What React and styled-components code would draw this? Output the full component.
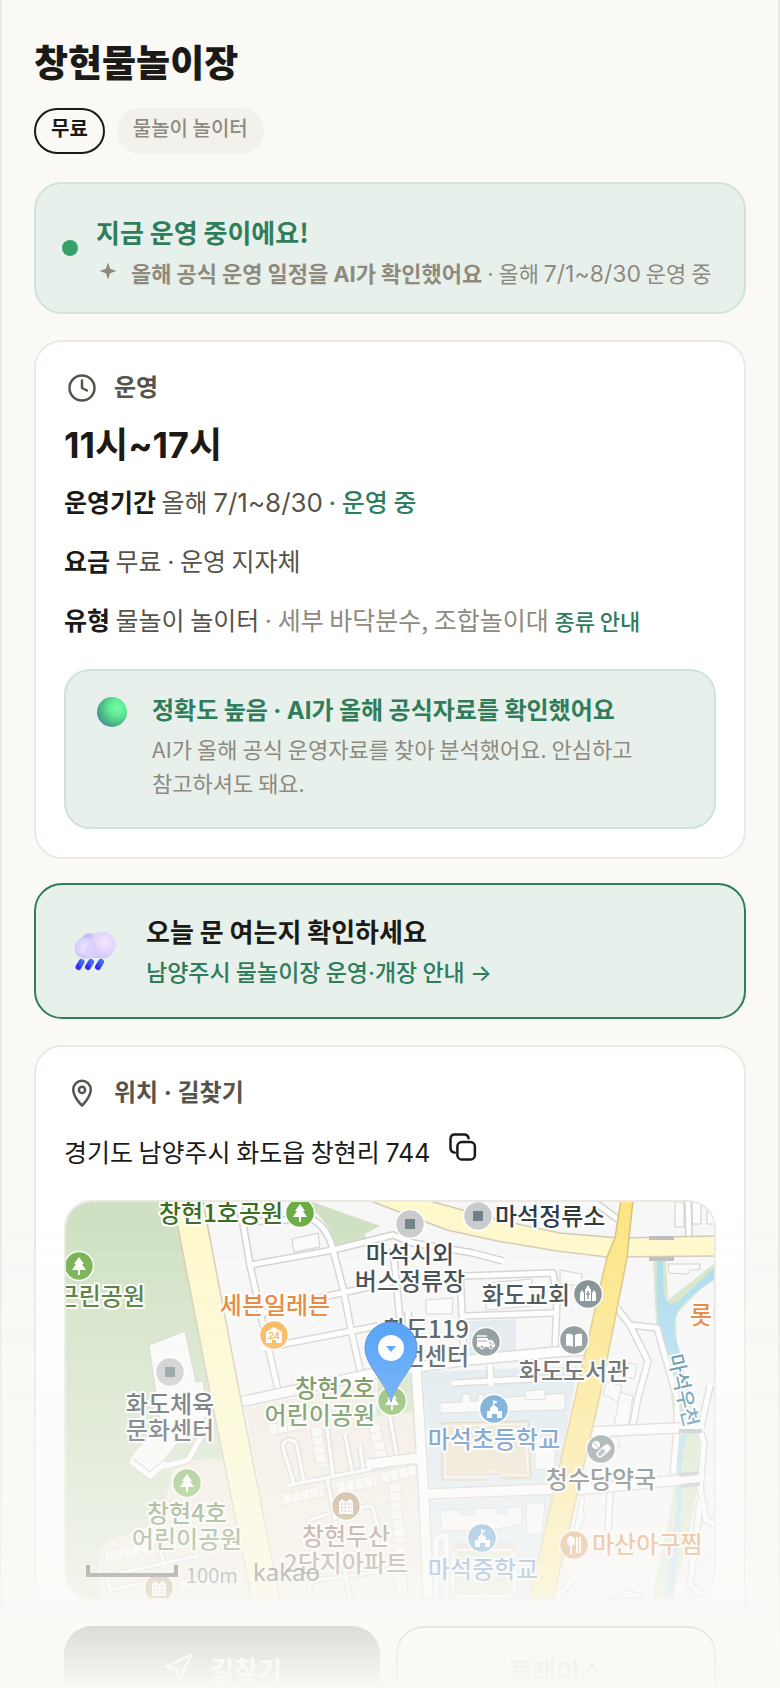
import React from 'react'
import styled, { createGlobalStyle } from 'styled-components'
import { Clock, Navigation } from 'lucide-react'

const Colors = {
  page: '#faf9f6',
  line: '#ebe9e2',
  ink: '#1c1a17',
  body: '#57534a',
  muted: '#8f8a7e',
  green: '#2f7d5b',
  mint: '#e8f0eb',
  mintLine: '#cfe4d8',
}

const Fonts = {
  text: "'Noto Sans CJK KR', sans-serif",
  display: "Inter, 'Noto Sans CJK KR', sans-serif",
}

const GlobalStyle = createGlobalStyle`
  * {
    box-sizing: border-box;
  }

  body {
    margin: 0;
    background: ${Colors.page};
    color: ${Colors.ink};
    font-family: ${Fonts.text};
    font-size: 25px;
    line-height: 36px;
    word-break: keep-all;
  }

  h1, h2, p {
    margin: 0;
  }
`

const Page = styled.main`
  position: relative;
  height: 100vh;
  overflow: hidden;
  padding: 38px 32px 0;
  border: solid ${Colors.line};
  border-width: 0 2px;
`

// Latin letters, digits and signs inside Korean text
const Num = styled.span`
  font-family: ${Fonts.display};
  font-size: ${(p) => (p.$size ? `${p.$size}px` : 'inherit')};
  line-height: 1;
`

const Title = styled.h1`
  font-size: 37px;
  line-height: 46px;
  font-weight: 800;
`

const Chips = styled.div`
  display: flex;
  gap: 12px;
  margin: 24px 0 28px;
`

const Chip = styled.span`
  padding: 3px ${(p) => (p.$strong ? 15 : 14)}px 9px;
  border: 2px solid ${(p) => (p.$strong ? Colors.ink : '#f3f1ec')};
  border-radius: 23px;
  background: ${(p) => (p.$strong ? Colors.page : '#f3f1ec')};
  color: ${(p) => (p.$strong ? Colors.ink : Colors.muted)};
  font-size: 20px;
  line-height: 30px;
  font-weight: ${(p) => (p.$strong ? 700 : 500)};
`

const Status = styled.section`
  display: flex;
  align-items: center;
  gap: 18px;
  margin-bottom: 26px;
  padding: 22px 22px 22px 26px;
  border: 2px solid ${Colors.mintLine};
  border-radius: 28px;
  background: ${Colors.mint};
`

const StatusBody = styled.div`
  padding-top: 6px;
`

const Dot = styled.span`
  flex: none;
  width: 16px;
  height: 16px;
  border-radius: 50%;
  background: #36a26b;
`

const StatusTitle = styled.h2`
  margin-bottom: 2px;
  color: ${Colors.green};
  font-size: 26px;
  line-height: 40px;
  font-weight: 700;
`

const StatusNote = styled.p`
  display: flex;
  gap: 13px;
  color: ${Colors.muted};
  font-size: 22px;
  line-height: 36px;

  svg {
    flex: none;
    margin: 7px 0 0 2px;
  }
`

const Card = styled.section`
  margin-bottom: 24px;
  padding: 28px;
  border: 2px solid ${Colors.line};
  border-radius: 28px;
  background: #fff;
`

const CardHead = styled.h2`
  display: flex;
  align-items: center;
  gap: 14px;
  color: ${Colors.body};
  font-family: ${Fonts.display};
  font-size: 24px;
  line-height: 36px;
  font-weight: 700;

  svg {
    margin: 0 3px;
  }
`

const Hours = styled.p`
  margin: 15px 0 12px;
  font-family: ${Fonts.display};
  font-size: 36px;
  line-height: 48px;
  font-weight: 700;
`

const Info = styled.p`
  margin-bottom: 19px;
  color: ${Colors.body};
  line-height: 40px;

  b {
    color: ${Colors.ink};
  }
`

const Accent = styled.span`
  color: ${Colors.green};
  font-weight: 500;
`

const Muted = styled.span`
  color: ${Colors.muted};
`

const GuideLink = styled.a`
  color: ${Colors.green};
  font-size: 22px;
  font-weight: 500;
  line-height: 1;
  text-decoration: none;
`

const Accuracy = styled.div`
  display: flex;
  gap: 24px;
  margin-top: 30px;
  padding: 20px 30px 28px;
  border: 2px solid ${Colors.mintLine};
  border-radius: 26px;
  background: ${Colors.mint};

  svg {
    flex: none;
    margin-top: 5px;
  }
`

const AccuracyTitle = styled.p`
  margin-bottom: 4px;
  color: ${Colors.green};
  font-size: 24px;
  line-height: 36px;
  font-weight: 700;
`

const AccuracyText = styled.p`
  max-width: 520px;
  color: ${Colors.muted};
  font-size: 22px;
  line-height: 34px;
`

const Notice = styled.a`
  display: flex;
  align-items: center;
  gap: 24px;
  margin-bottom: 26px;
  padding: 26px 32px;
  border: 2px solid ${Colors.green};
  border-radius: 28px;
  background: ${Colors.mint};
  color: ${Colors.green};
  text-decoration: none;

  svg {
    flex: none;
  }
`

const NoticeTitle = styled.span`
  display: block;
  color: ${Colors.ink};
  font-size: 26px;
  line-height: 40px;
  font-weight: 700;
`

const NoticeText = styled.span`
  display: block;
  font-size: 23px;
  line-height: 40px;
  font-weight: 500;
`

const Address = styled.div`
  display: flex;
  align-items: center;
  gap: 18px;
  margin: 20px 0 29px;
`

const CopyButton = styled.button`
  display: flex;
  padding: 1px 0 9px;
  border: 0;
  background: none;
  color: ${Colors.ink};
  cursor: pointer;
`

const MapFrame = styled.div`
  overflow: hidden;
  height: 400px;
  border: 2px solid ${Colors.line};
  border-radius: 28px;
  background: #f7f7f7;

  svg {
    display: block;
    width: 100%;
    height: 100%;
  }
`

const Label = styled.text`
  fill: ${(p) => p.$color};
  stroke: #fff;
  stroke-width: 4px;
  stroke-linejoin: round;
  paint-order: stroke;
  font-family: ${Fonts.text};
  font-size: ${(p) => p.$size || 24}px;
  font-weight: 500;
  text-anchor: ${(p) => p.$anchor || 'middle'};
`

const Actions = styled.div`
  display: flex;
  gap: 16px;
  margin-top: 26px;
`

const Action = styled.button`
  box-sizing: content-box;
  display: flex;
  flex: 1 1 0;
  align-items: center;
  justify-content: center;
  gap: 16px;
  padding: 0;
  height: 84px;
  border: ${(p) => (p.$primary ? '0' : `2px solid ${Colors.green}`)};
  border-radius: 28px;
  background: ${(p) => (p.$primary ? Colors.ink : '#fff')};
  color: ${(p) => (p.$primary ? '#fff' : Colors.green)};
  font-family: ${Fonts.display};
  font-size: 26px;
  font-weight: 700;
  cursor: pointer;
`

const Fade = styled.div`
  position: fixed;
  left: 0;
  right: 0;
  bottom: 0;
  height: 480px;
  background: linear-gradient(to top, rgba(250, 249, 246, 1), rgba(250, 249, 246, 0));
  pointer-events: none;
`

function Sparkle() {
  return (
    <svg width="20" height="20" viewBox="0 0 20 20" aria-hidden="true">
      <path d="M10 1.500 L12.200 7.800 L18.500 10 L12.200 12.200 L10 18.500 L7.800 12.200 L1.500 10 L7.800 7.800 Z" fill={Colors.muted} />
    </svg>
  )
}

function Pin() {
  return (
    <svg width="30" height="30" viewBox="0 0 24 24" fill="none" stroke="currentColor" strokeWidth="2" strokeLinejoin="round" aria-hidden="true">
      <path d="M12 22 C12 22 19 15.500 19 9.200 A7 7 0 0 0 5 9.200 C5 15.500 12 22 12 22 Z" />
      <circle cx="12" cy="9.500" r="2.500" />
    </svg>
  )
}

function CopyIcon() {
  return (
    <svg width="30" height="30" viewBox="0 0 24 24" fill="none" stroke="currentColor" strokeWidth="2" strokeLinecap="round" aria-hidden="true">
      <rect x="7.500" y="8" width="14" height="14" rx="3.500" />
      <path d="M5.500 16.500 Q2 16 2 13 V5.500 Q2 2 5.500 2 H13 Q16 2 16.500 5" />
    </svg>
  )
}

function Ball() {
  return (
    <svg width="32" height="32" viewBox="0 0 32 32" aria-hidden="true">
      <defs>
        <radialGradient id="ball" cx="0.68" cy="0.36" r="0.72">
          <stop offset="0" stopColor="#72fba6" />
          <stop offset="0.4" stopColor="#62e895" />
          <stop offset="0.75" stopColor="#4cb985" />
          <stop offset="1" stopColor="#4b8fa0" />
        </radialGradient>
      </defs>
      <circle cx="16" cy="16" r="15" fill="url(#ball)" />
    </svg>
  )
}

function RainCloud() {
  return (
    <svg width="54" height="54" viewBox="0 0 54 54" aria-hidden="true">
      <defs>
        <radialGradient id="puffA" cx="0.5" cy="0.45" r="0.6">
          <stop offset="0" stopColor="#efe4fb" />
          <stop offset="0.6" stopColor="#dcd2fd" />
          <stop offset="1" stopColor="#c6bdf9" />
        </radialGradient>
        <radialGradient id="puffB" cx="0.6" cy="0.4" r="0.65">
          <stop offset="0" stopColor="#f1e7fb" />
          <stop offset="0.65" stopColor="#dfd3fd" />
          <stop offset="1" stopColor="#c6bbfa" />
        </radialGradient>
        <linearGradient id="drop" x1="0" y1="1" x2="1" y2="0">
          <stop offset="0" stopColor="#3a2cf2" />
          <stop offset="1" stopColor="#3f6cf5" />
        </linearGradient>
      </defs>
      <circle cx="21" cy="16" r="7" fill="#c3bdf9" />
      <path d="M15 18 H37 V34 H17 Z" fill="#d6ccfd" />
      <circle cx="34" cy="21" r="13.500" fill="url(#puffB)" />
      <circle cx="17" cy="24" r="10.500" fill="url(#puffA)" />
      <path d="M17 24 Q24 16 33 26 Q31 34 23 34.500 H18 Z" fill="#dad0fd" opacity="0.8" />
      <g stroke="url(#drop)" strokeWidth="6" strokeLinecap="round">
        <path d="M13.500 38 L10.500 43" />
        <path d="M23 38 L20 43" />
        <path d="M33 38 L30 43" />
      </g>
    </svg>
  )
}

// centre lines of the small streets, drawn as grey casing + white fill
const STREETS = [
  'M171 0 L176 16 L184 63 L196 118 L212 188',
  'M184 63 L267 48 L327 33 L347 41 L407 51 L437 59',
  'M178 20 L246 17 Q262 26 267 48 L277 86 L286 133 L295 172',
  'M194 112 L257 95 L331 79',
  'M198 146 L286 129 L312 124',
  'M398 74 L487 71 L491 96 L489 149',
  'M394 70 L398 154',
  'M399 114 L487 111',
  'M327 46 L334 118',
  'M342 110 L344 160',
  'M388 181 L482 176',
  'M424 164 L425 182',
  'M551 106 L564 123 L591 126 L611 196 L611 226 L607 275',
  'M564 123 L582 159 L572 196 L566 228',
  'M644 184 L634 229 L638 240 L634 286 L640 318 L648 322',
  'M634 300 L624 383 L640 396',
  'M544 289 L542 331',
  'M496 390 L508 376',
  'M622 0 L623 36',
  'M528 0 L556 20',
  'M100 264 L122 258 L142 222',
  'M66 260 L84 274 L98 262',
]

const WIDE_STREETS = [
  'M174 200 L300 173 L350 165 L404 158 L489 150 L520 148',
  'M350 163 L358 296 L362 396',
  'M362 292 L490 287',
  'M510 288 L604 279 L634 276',
  'M522 230 L611 226 L634 226',
  'M304 262 L352 256',
]

const LANES = [
  'M228 282 L217 246 Q216 238 224 238 Q230 238 231 244 L238 280',
  'M224 283 L350 258',
  'M261 226 L267 273',
  'M261 276 L284 396',
  'M279 233 L286 268',
  'M294 244 L297 266',
  'M324 216 L332 260',
  'M262 312 L244 318 Q240 330 250 328',
  'M296 306 Q306 300 308 310 L314 336',
  'M244 390 Q240 380 252 378 L340 366',
  'M92 340 L98 362 M44 390 Q38 372 50 372 L130 354',
  'M44 388 L74 382',
]

// blocks of row houses: thick strokes cut into units by a dash
const ROWS = [
  'M250 226 L256 264',
  'M308 222 L316 258',
  'M218 297 L257 289',
  'M272 286 L310 278',
  'M316 276 L350 268',
  'M204 228 L236 222',
  'M40 355 L80 346',
  'M114 384 L158 374',
  'M328 282 L334 340',
  'M334 346 L336 392',
]

function Tree() {
  return (
    <path
      d="M0 -9 L5 -2 H3 L7 4 H1 V9 H-1 V4 H-7 L-3 -2 H-5 Z"
      fill="#fff"
    />
  )
}

function School() {
  return (
    <path d="M-1 -9 L4 -7 L0 -5 V-4 L4 -1 V2 H8 V9 H3 V5 H-2 V9 H-7 V2 H-4 V-1 L-1 -4 Z" fill="#fff" />
  )
}

function Apartment({ color }) {
  return (
    <g>
      <path d="M-7 8 V-4 L-4 -7 L0 -4 L4 -7 L7 -4 V8 Z" fill="#fff" />
      <g stroke={color} strokeWidth="1.500" strokeDasharray="1.500 2">
        <path d="M-5 -2 H6 M-5 1.500 H6 M-5 5 H6" />
      </g>
    </g>
  )
}

function Square() {
  return <rect x="-5" y="-5" width="10" height="10" fill="#6e8087" />
}

function Church() {
  return (
    <g fill="#fff">
      <path d="M-8 7 V-1 L-6 -4 L-4 -1 V7 Z M8 7 V-1 L6 -4 L4 -1 V7 Z M-3 7 V-4 L0 -9 L3 -4 V7 Z" />
      <path d="M0 -3 V5 M-2 0 H2" stroke="#7d898d" strokeWidth="1.500" />
    </g>
  )
}

function FireTruck() {
  return (
    <g>
      <path d="M-9 -4 H2 V-2 H6 L9 2 V5 H-9 Z" fill="#fff" />
      <path d="M-9 -6 H1" stroke="#fff" strokeWidth="1.500" />
      <path d="M-8 -1 H1 M4 -1 V2 H8" stroke="#87939a" fill="none" />
      <circle cx="-4" cy="5" r="2" fill="#87939a" stroke="#fff" />
      <circle cx="5" cy="5" r="2" fill="#87939a" stroke="#fff" />
    </g>
  )
}

function Book() {
  return (
    <g fill="#fff">
      <path d="M-1 -5 Q-4 -7 -8 -6 V6 Q-4 5 -1 7 Z" />
      <path d="M1 -5 Q4 -7 8 -6 V6 Q4 5 1 7 Z" />
    </g>
  )
}

function Pill() {
  return (
    <g strokeLinecap="round">
      <path d="M-1 5 L6 -1" stroke="#fff" strokeWidth="7" />
      <path d="M-1 5 L2 2" stroke="#8b9598" strokeWidth="4" />
      <circle cx="-5" cy="-4" r="4" fill="#fff" />
      <path d="M-8 -7 L-2 -1" stroke="#8b9598" />
    </g>
  )
}

function Cutlery() {
  return (
    <g fill="#fff">
      <ellipse cx="-3" cy="-4" rx="4" ry="5" />
      <rect x="-4" y="0" width="2" height="9" />
      <rect x="2" y="-8" width="2" height="16" />
      <rect x="5" y="-8" width="2" height="16" />
    </g>
  )
}

function Store() {
  return (
    <g>
      <path d="M-8 8 V-3 L0 -8 L8 -3 V8 H2 V5 H-2 V8 Z" fill="#fff" />
      <text x="0" y="4" textAnchor="middle" fontFamily="Inter, sans-serif" fontSize="9" fontWeight="700" fill="#f5a33a">24</text>
    </g>
  )
}

const PLACES = [
  { x: 234, y: 11, color: '#6cac45', Glyph: Tree },
  { x: 13, y: 64, color: '#6cac45', Glyph: Tree },
  { x: 121, y: 281, color: '#6cac45', Glyph: Tree },
  { x: 326, y: 199, color: '#6cac45', Glyph: Tree },
  { x: 208, y: 133, color: '#fdaa3c', Glyph: Store },
  { x: 104, y: 170, color: '#c4c5ca', Glyph: Square },
  { x: 412, y: 14, color: '#c9cacd', Glyph: Square },
  { x: 344, y: 22, color: '#c9cacd', Glyph: Square },
  { x: 522, y: 92, color: '#728085', Glyph: Church },
  { x: 420, y: 140, color: '#728085', Glyph: FireTruck },
  { x: 508, y: 138, color: '#728085', Glyph: Book },
  { x: 535, y: 247, color: '#728085', Glyph: Pill },
  { x: 428, y: 207, color: '#3584c9', Glyph: School },
  { x: 416, y: 336, color: '#3584c9', Glyph: School },
  { x: 508, y: 343, color: '#d38336', Glyph: Cutlery },
  { x: 280, y: 304, color: '#a87c50', Glyph: Apartment },
  { x: 93, y: 386, color: '#a87c50', Glyph: Apartment },
]

const DARK = '#2c393f'
const PARK = '#3b6b20'
const ORANGE = '#e5701a'

const LABELS = [
  { x: 93, y: 20, text: '창현1호공원', color: PARK, anchor: 'start' },
  { x: 79, y: 103, text: '근린공원', color: PARK, anchor: 'end' },
  { x: 209, y: 112, text: '세븐일레븐', color: ORANGE },
  { x: 104, y: 211, text: '화도체육', color: DARK },
  { x: 104, y: 237, text: '문화센터', color: DARK },
  { x: 309, y: 195, text: '창현2호', color: PARK, anchor: 'end' },
  { x: 309, y: 222, text: '어린이공원', color: PARK, anchor: 'end' },
  { x: 121, y: 320, text: '창현4호', color: PARK },
  { x: 121, y: 346, text: '어린이공원', color: PARK },
  { x: 280, y: 343, text: '창현두산', color: '#664334' },
  { x: 280, y: 370, text: '2단지아파트', color: '#664334' },
  { x: 429, y: 23, text: '마석정류소', color: DARK, anchor: 'start' },
  { x: 344, y: 61, text: '마석시외', color: DARK },
  { x: 344, y: 88, text: '버스정류장', color: DARK },
  { x: 504, y: 102, text: '화도교회', color: DARK, anchor: 'end' },
  { x: 403, y: 136, text: '화도119', color: DARK, anchor: 'end' },
  { x: 403, y: 163, text: '안전센터', color: DARK, anchor: 'end' },
  { x: 508, y: 178, text: '화도도서관', color: DARK },
  { x: 428, y: 246, text: '마석초등학교', color: '#1c66b3' },
  { x: 535, y: 286, text: '청수당약국', color: DARK },
  { x: 526, y: 351, text: '마산아구찜', color: '#cf6a12', anchor: 'start' },
  { x: 417, y: 376, text: '마석중학교', color: '#1c66b3' },
  { x: 624, y: 122, text: '롯데', color: ORANGE, anchor: 'start' },
]

function Streets({ paths, width }) {
  return (
    <g fill="none" strokeLinejoin="round">
      {paths.map((d) => <path key={d} d={d} stroke="#d0d0d0" strokeWidth={width + 3} />)}
      {paths.map((d) => <path key={d} d={d} stroke="#fff" strokeWidth={width} strokeLinecap="round" />)}
    </g>
  )
}

function KakaoMap() {
  return (
    <svg viewBox="0 0 648 396" preserveAspectRatio="xMidYMid slice" role="img" aria-label="창현물놀이장 지도">
      <rect width="648" height="396" fill="#f7f7f8" />

      {/* parks and hillside */}
      <path d="M0 0 H108 L186 396 H0 Z" fill="#cfe1c2" />
      <path d="M247 0 L314 24 L299 32 L300 38 L270 45 L264 28 L252 12 L236 8 Z" fill="#cfe1c2" />
      <path d="M312 176 L347 168 L350 210 L310 216 Z" fill="#cfe1c2" />

      {/* residential blocks */}
      <path d="M162 257 Q120 256 107 266 L99 299 Q90 328 62 332 Q34 338 32 356 V396 H190 Z" fill="#f0e9dc" />
      <path d="M179 206 L310 180 V214 L350 210 L356 396 H214 Z" fill="#f1eade" />

      {/* school grounds */}
      <path d="M357 170 L512 164 L490 284 L364 288 Z" fill="#dae7ef" />
      <path d="M364 299 L487 293 L465 396 H364 Z" fill="#dae7ef" />
      <path d="M402 119 L450 117 V153 L404 155 Z" fill="#dfe8ef" />
      <g fill="#fafafa" stroke="#cfcfcf">
        <path d="M374 201 L396 200 V192 H404 V199 L412 199 V192 H418 V197 L499 191 V208 L374 211 Z" />
        <path d="M459 189 L479 187 V197 L459 198 Z" />
        <path d="M469 236 L489 234 V266 L469 268 Z" />
        <path d="M374 312 Q374 308 380 308 L456 305 V322 Q440 327 424 327 L376 329 Z" />
        <path d="M460 301 H479 L476 332 H461 Z" />
      </g>
      <path d="M376 221 L463 219 L465 276 L437 277 V272 H420 V278 L376 278 Z" fill="#e9dec6" stroke="#cbbda2" />
      <path d="M379 224 L460 222 L462 273 L436 273 V270 H420 V275 L379 275 Z" fill="none" stroke="#fff" />
      <path d="M392 308 H410 V314 H392 Z M430 306 H442 V313 H430 Z" fill="#dae7ef" />
      <path d="M386 341 H449 V396 H386 Z" fill="#e4d3c5" />
      <rect x="387" y="348" width="61" height="46" rx="6" fill="#d8e5c6" stroke="#fff" strokeWidth="2" />
      <path d="M416 349 V394 M389 371 H446" stroke="#fff" />
      <path d="M370 396 V340 Q370 334 376 334 H380 V396" fill="none" stroke="#fff" strokeWidth="4" />

      {/* other buildings */}
      <g fill="#fbfbfb" stroke="#cdcdcd">
        <path d="M226 37 L252 31 L254 45 L228 50 Z" />
        <path d="M494 68 L516 72 V84 L494 82 Z" />
        <path d="M420 81 L466 77 V104 L420 108 Z" />
        <path d="M360 98 L387 96 L386 112 L360 112 Z" />
        <path d="M602 62 H634 L633 68 L624 68 L622 72 L603 71 Z" />
        <path d="M609 0 H618 V25 H609 Z M626 0 H635 V22 H626 Z M641 0 H650 V22 H641 Z" />
        <path d="M552 158 L571 163 L568 177 L549 172 Z" />
        <path d="M541 180 L556 184 L552 200 L537 192 Z" />
        <path d="M554 190 L567 194 L562 226 L548 224 Z" />
        <path d="M545 235 H553 V246 H545 Z" />
        <path d="M514 295 L519 297 L517 310 L520 312 L514 328 H508 Z" />
        <path d="M544 396 L556 388 L577 391 L574 396 Z" />
        <path d="M83 143 L119 129 L130 180 L137 179 L142 214 L128 222 L84 274 L64 256 L94 220 Z" />
      </g>
      <g fill="none">
        {ROWS.map((d) => <path key={d} d={d} stroke="#dfd8cd" strokeWidth="12" />)}
        {ROWS.map((d) => <path key={d} d={d} stroke="#fbfaf8" strokeWidth="10" strokeDasharray="8 1" />)}
      </g>

      {/* stream */}
      <path d="M587 59 L600 59 L602 98 L648 62 V74 L610 112 L611 150 L628 205 L633 240 L632 280 L622 340 L606 396 H586 L602 320 L609 280 V226 L602 170 L590 120 Z" fill="#d3e5c4" />
      <path d="M591 59 H597 L598 92 Q600 106 612 100 L648 66 V78 Q612 100 609 118 Q607 130 614 150 L622 190 L625 222 Q614 250 615 276 L616 300 L613 340 L607 396 H599 L607 340 L611 300 V270 Q610 240 620 226 L606 160 L592 122 Q590 100 591 59 Z" fill="#a6daee" />

      <Streets paths={LANES} width={3} />
      <Streets paths={STREETS} width={5} />
      <Streets paths={WIDE_STREETS} width={9} />

      {/* main roads */}
      <path d="M106 -2 L112 26 L144 190 L186 398 H214 L174 193 L142 26 L137 -2 Z" fill="#fef9cb" stroke="#d3c8b2" strokeWidth="1.500" />
      <path d="M302 -2 L381 28 L431 39 L491 49 L541 55 L650 54 V34 L554 36 L494 31 L437 19 L360 -2 Z" fill="#fef9cb" stroke="#d3c8b2" strokeWidth="1.500" />
      <path d="M555 -2 L549 36 L541 55 L509 196 L463 398 H487 L534 193 L561 56 L563 36 L567 -2 Z" fill="#fde583" stroke="#d8c176" strokeWidth="1.500" />
      <path d="M583 36 H608 M583 57 H608 M613 229 H636 M613 273 L633 271 M615 284 L634 282" stroke="#b9babd" strokeWidth="4" />

      {PLACES.map(({ x, y, color, Glyph }) => (
        <g key={`${x}-${y}`} transform={`translate(${x} ${y})`}>
          <circle r="14.500" fill={color} stroke="#fff" strokeWidth="1.500" />
          <Glyph color={color} />
        </g>
      ))}

      {LABELS.map(({ x, y, text, color, anchor }) => (
        <Label key={`${text}-${y}`} x={x} y={y} $color={color} $anchor={anchor}>{text}</Label>
      ))}
      <Label $color="#2c7a94" $size="20" $anchor="start" transform="translate(602 154) rotate(77)">마석우천</Label>

      {/* marker */}
      <path d="M325 200 C320 180 299 164 299 146 A26 26 0 0 1 351 146 C351 164 330 180 325 200 Z" fill="#2489f9" stroke="#2a6cc4" />
      <circle cx="325" cy="146" r="13" fill="#fff" />
      <path d="M320 144 H330 L325 150 Z" fill="#2489f9" />

      <path d="M22 363 V373 H110 V363" fill="none" stroke="#000" strokeWidth="4" />
      <text x="120" y="381" fontFamily="'Noto Sans CJK KR', sans-serif" fontSize="20" fill="#333">100m</text>
      <text x="187" y="379" fontFamily="'Noto Sans', sans-serif" fontSize="24" fill="#000">kakao</text>
    </svg>
  )
}

export default function App() {
  return (
    <>
      <GlobalStyle />
      <Page>
        <Title>창현물놀이장</Title>
        <Chips>
          <Chip $strong>무료</Chip>
          <Chip>물놀이 놀이터</Chip>
        </Chips>

        <Status>
          <Dot />
          <StatusBody>
            <StatusTitle>지금 운영 중이에요!</StatusTitle>
            <StatusNote>
              <Sparkle />
              <span>
                <b>올해 공식 운영 일정을 <Num>AI</Num>가 확인했어요</b> <Num>·</Num> 올해 <Num $size={23}>7/1~8/30</Num> 운영 중
              </span>
            </StatusNote>
          </StatusBody>
        </Status>

        <Card>
          <CardHead><Clock size={30} strokeWidth={2} />운영</CardHead>
          <Hours>11시~17시</Hours>
          <Info><b>운영기간</b> 올해 <Num $size={26}>7/1~8/30</Num> <Accent><Num>·</Num> 운영 중</Accent></Info>
          <Info><b>요금</b> 무료 <Num>·</Num> 운영 지자체</Info>
          <Info>
            <b>유형</b> 물놀이 놀이터 <Muted><Num>·</Num> 세부 바닥분수, 조합놀이대</Muted> <GuideLink href="#types">종류 안내</GuideLink>
          </Info>
          <Accuracy>
            <Ball />
            <div>
              <AccuracyTitle>정확도 높음 <Num>·</Num> <Num>AI</Num>가 올해 공식자료를 확인했어요</AccuracyTitle>
              <AccuracyText>AI가 올해 공식 운영자료를 찾아 분석했어요. 안심하고 참고하셔도 돼요.</AccuracyText>
            </div>
          </Accuracy>
        </Card>

        <Notice href="#notice">
          <RainCloud />
          <span>
            <NoticeTitle>오늘 문 여는지 확인하세요</NoticeTitle>
            <NoticeText>남양주시 물놀이장 운영<Num>·</Num>개장 안내 <Num>→</Num></NoticeText>
          </span>
        </Notice>

        <Card>
          <CardHead><Pin />위치 · 길찾기</CardHead>
          <Address>
            <span>경기도 남양주시 화도읍 창현리 <Num>744</Num></span>
            <CopyButton type="button" aria-label="주소 복사"><CopyIcon /></CopyButton>
          </Address>
          <MapFrame>
            <KakaoMap />
          </MapFrame>
          <Actions>
            <Action type="button" $primary><Navigation size={32} strokeWidth={2} />길찾기</Action>
            <Action type="button">플레이스</Action>
          </Actions>
        </Card>
      </Page>
      <Fade />
    </>
  )
}
